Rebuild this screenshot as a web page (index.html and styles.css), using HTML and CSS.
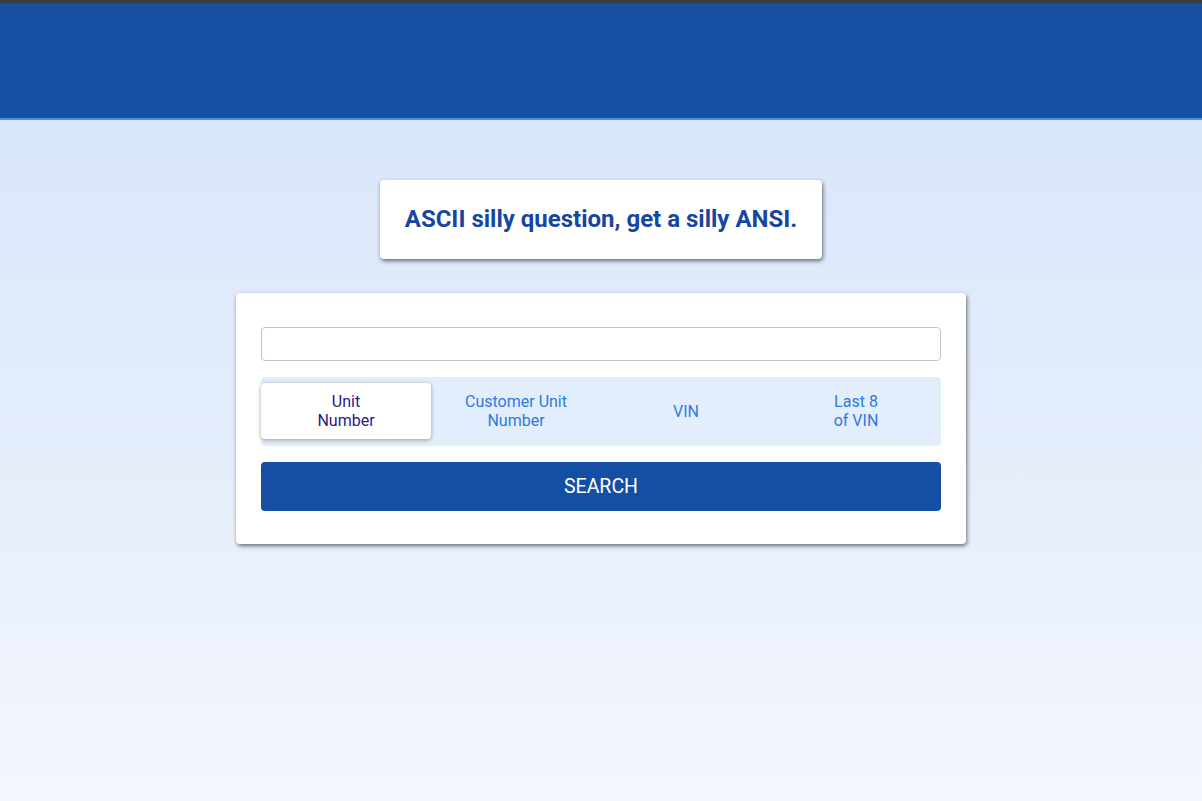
FILE: index.html
```html
<!DOCTYPE html>
<html lang="en">
<head>
<meta charset="utf-8">
<title>Search</title>
<link rel="stylesheet" href="styles.css">
</head>
<body>
<header class="topbar"></header>
<main class="content">
  <div class="quote-card">ASCII silly question, get a silly ANSI.</div>
  <section class="search-card">
    <input class="search-input" type="text" aria-label="Search">
    <div class="tabs">
      <button class="tab tab-active">Unit<br>Number</button>
      <button class="tab">Customer Unit<br>Number</button>
      <button class="tab">VIN</button>
      <button class="tab">Last 8<br>of VIN</button>
    </div>
    <button class="search-btn">SEARCH</button>
  </section>
</main>
</body>
</html>
```
FILE: styles.css
```css
* { box-sizing: border-box; }
html, body { margin: 0; height: 100%; }
body {
  font-family: Roboto, "Liberation Sans", Arial, sans-serif;
  background: linear-gradient(to bottom, #d4e4fa 0px, #e6eefb 480px, #f4f7fd 801px);
  min-height: 801px;
}
.topbar {
  height: 120px;
  background: #1550a3;
  border-top: 3px solid #3a3b3d;
  border-bottom: 2px solid #4d8fe6;
  box-shadow: inset 0 1px 0 #0d4aa8;
}
.content {
  display: flex;
  flex-direction: column;
  align-items: center;
  padding-top: 60px;
}
.quote-card {
  width: 442px;
  height: 79px;
  background: #fff;
  border-radius: 4px;
  box-shadow: 1px 2px 4px rgba(0,0,0,0.55);
  display: flex;
  align-items: center;
  justify-content: center;
  color: #1646a0;
  font-size: 24px;
  font-weight: 700;
  padding-bottom: 1px;
}
.search-card {
  margin-top: 34px;
  width: 730px;
  background: #fff;
  border-radius: 4px;
  box-shadow: 1px 2px 4px rgba(0,0,0,0.55);
  padding: 34px 25px 33px 25px;
  display: flex;
  flex-direction: column;
  gap: 16px;
}
.search-input {
  height: 34px;
  width: 100%;
  border: 1px solid #c4c4c4;
  border-radius: 4px;
  background: #fff;
  font: inherit;
  font-size: 16px;
  padding: 0 10px;
}
.tabs {
  display: grid;
  grid-template-columns: repeat(4, 1fr);
  height: 69px;
  padding: 6px 0 7px;
  background: #e3eefc;
  border-radius: 4px;
}
.tab {
  border: none;
  background: transparent;
  font-family: inherit;
  font-size: 16px;
  line-height: 19px;
  color: #2e7ae0;
  text-align: center;
  padding: 0;
  cursor: pointer;
}
.tab-active {
  background: #fff;
  color: #261b86;
  border-radius: 4px;
  box-shadow: 0 1px 4px rgba(0,0,0,0.35);
}
.search-btn {
  height: 49px;
  width: 100%;
  border: none;
  border-radius: 4px;
  background: #154fa3;
  color: #fff;
  font-family: inherit;
  font-size: 19.5px;
  cursor: pointer;
}
```
